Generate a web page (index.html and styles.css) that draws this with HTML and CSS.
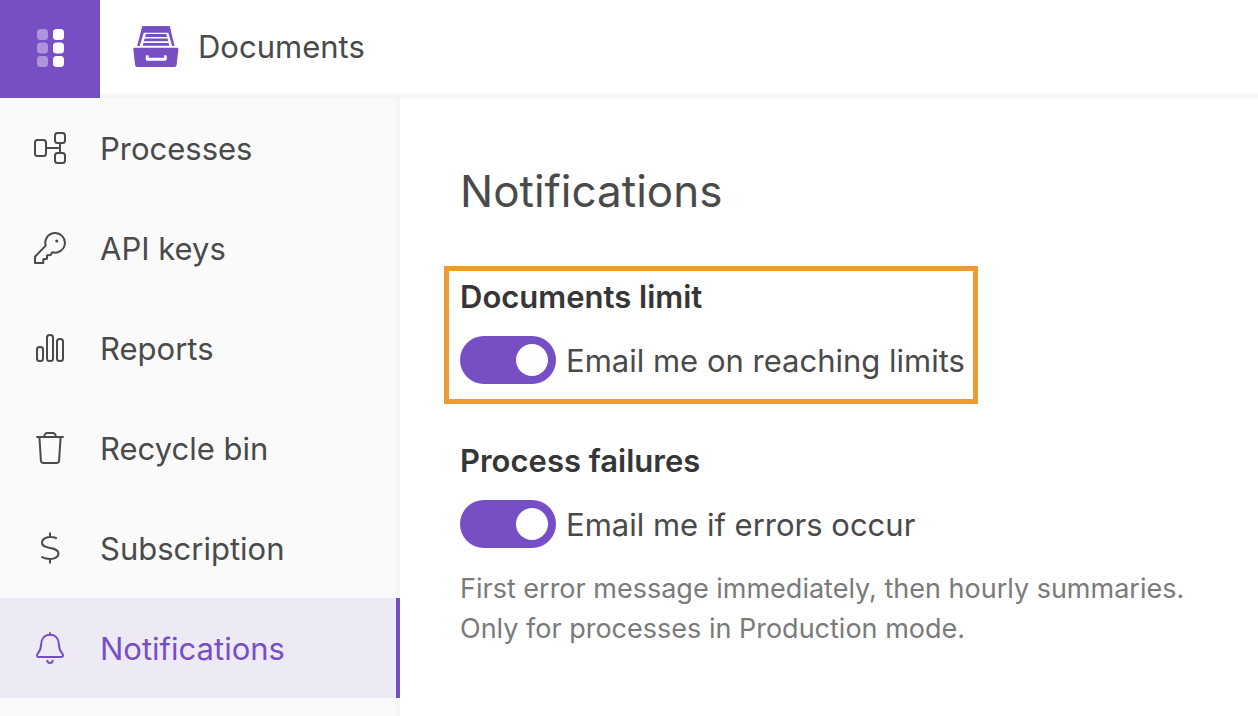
FILE: index.html
```html
<!DOCTYPE html>
<html lang="en">
<head>
<meta charset="utf-8">
<meta name="viewport" content="width=device-width, initial-scale=1">
<title>Documents – Notifications</title>
<link rel="stylesheet" href="styles.css">
</head>
<body>
<header class="topbar">
  <button class="launcher" type="button" aria-label="Open menu">
    <svg width="28" height="38" viewBox="0 0 28 38" fill="#fff" aria-hidden="true">
      <g opacity=".4"><rect width="11" height="11" rx="3.5"/><rect y="13.5" width="11" height="11" rx="3.5"/><rect y="27" width="11" height="11" rx="3.5"/></g>
      <rect x="16" width="11" height="11" rx="3.5"/><rect x="16" y="13.5" width="11" height="11" rx="3.5"/><rect x="16" y="27" width="11" height="11" rx="3.5"/>
    </svg>
  </button>
  <div class="brand">
    <svg width="46" height="42" viewBox="0 0 46 42" fill="#774fc5" aria-hidden="true">
      <path d="M9.3 .3H36.7L41.6 20H39.2L35.2 6.4H10.8L6.7 20H4.2Z"/>
      <path d="M9.3 .3H36.7L38.2 6.4H7.8Z"/>
      <path d="M12.8 8H33.4L34 11H12.2ZM11.6 12.5H34.6L35.2 15.2H11ZM10.4 17H35.6L36.2 19.8H9.7Z"/>
      <path fill-rule="evenodd" d="M1.5 21.7H44.2Q45.6 21.7 45.4 23.3L43.6 39Q43.3 41 41.5 41H4.2Q2.4 41 2.1 39L.3 23.3Q.1 21.7 1.5 21.7ZM14.3 29Q12.6 29 12.7 31V33Q12.7 34.8 14.5 34.8H32Q33.8 34.8 33.8 33V31Q33.8 29 32.2 29Q31 29 31 30.5V31.8H15.7V30.5Q15.7 29 14.3 29Z"/>
    </svg>
    <span>Documents</span>
  </div>
</header>
<div class="layout">
  <nav class="sidebar" aria-label="Main">
    <a class="nav-item" href="#processes">
      <svg class="icon" viewBox="0 0 32 32" aria-hidden="true"><rect x="1" y="8" width="11" height="16" rx="2.5"/><rect x="21" y="1" width="10" height="10" rx="2.5"/><rect x="21" y="21" width="10" height="10" rx="2.5"/><path d="M12 16H26M26 11V21"/></svg>
      <span class="label">Processes</span></a>
    <a class="nav-item" href="#api-keys">
      <svg class="icon" viewBox="0 0 32 32" aria-hidden="true"><path d="M11.7 13.6A9.8 9.8 0 1 1 18.3 20.2L16.6 22.9 13 23.3V26.8L9.3 27.3V31H1V24.7Z" stroke-linejoin="round"/><circle class="dot" cx="22.8" cy="9" r="1.6"/></svg>
      <span class="label">API keys</span></a>
    <a class="nav-item" href="#reports">
      <svg class="icon" viewBox="0 0 32 32" aria-hidden="true"><rect x="3" y="15" width="6" height="14" rx="2.5"/><rect x="13" y="3" width="6" height="26" rx="2.5"/><rect x="23" y="7" width="6" height="22" rx="2.5"/></svg>
      <span class="label">Reports</span></a>
    <a class="nav-item" href="#recycle-bin">
      <svg class="icon" viewBox="0 0 32 32" aria-hidden="true"><path d="M2.3 5H29.7M10 5C10.5 2 11.6 1 13.2 1H18.8C20.4 1 21.5 2 22 5M5.4 5L6.9 28.5Q7.1 31 9.5 31H22.5Q24.9 31 25.1 28.5L26.6 5"/></svg>
      <span class="label">Recycle bin</span></a>
    <a class="nav-item" href="#subscription">
      <svg class="icon" viewBox="0 0 32 32" aria-hidden="true"><path d="M16 .5V5M16 27V31.5M22.8 6.2C19.5 5 16.5 4.6 13.7 5.3C10.2 6.1 8 8.2 8 10.8C8 18 24.4 14 24.4 21.5C24.4 26.5 16.5 29 7.3 24.8"/></svg>
      <span class="label">Subscription</span></a>
    <a class="nav-item nav-item--active" href="#notifications" aria-current="page">
      <svg class="icon" viewBox="0 0 32 32" aria-hidden="true"><path d="M16 .3V2.8M16 2.8C10.5 2.8 7.3 6.8 7.1 12.5C7 17 6.5 18.2 4 21.2C2.3 23.4 2.6 25 4.8 25H27.2C29.4 25 29.7 23.4 28 21.2C25.5 18.2 25 17 24.9 12.5C24.7 6.8 21.5 2.8 16 2.8ZM13.1 28Q13.6 31 16 31T18.9 28"/></svg>
      <span class="label">Notifications</span></a>
  </nav>
  <main class="content">
    <h1>Notifications</h1>
    <section class="setting setting--highlighted">
      <h2>Documents limit</h2>
      <label class="toggle"><input type="checkbox" role="switch" checked><span class="label">Email me on reaching limits</span></label>
    </section>
    <section class="setting">
      <h2>Process failures</h2>
      <label class="toggle"><input type="checkbox" role="switch" checked><span class="label">Email me if errors occur</span></label>
      <p>First error message immediately, then hourly summaries.<br>Only for processes in Production mode.</p>
    </section>
  </main>
</div>
</body>
</html>
```

FILE: styles.css
```css
:root {
  --purple: #774fc5;
  --text: #4a4a4a;
  --line: #f5f5f5;
}

* {
  box-sizing: border-box;
}

body {
  margin: 0;
  min-height: 100vh;
  display: flex;
  flex-direction: column;
  background: #fff;
  color: var(--text);
  font: 31px/40px Inter, "Liberation Sans", sans-serif;
}

.topbar {
  display: flex;
}

.launcher {
  display: grid;
  place-items: center;
  width: 100px;
  height: 98px;
  padding: 0 0 2px 2px;
  border: 0;
  background: var(--purple);
}

.brand {
  flex: 1;
  display: flex;
  align-items: center;
  gap: 19px;
  padding-left: 33px;
  border-bottom: 4px solid var(--line);
}

.label {
  padding-top: 1px;
}

.layout {
  flex: 1;
  display: flex;
}

.sidebar {
  flex: none;
  width: 400px;
  background: #fafafa;
  box-shadow: inset -4px 0 var(--line);
}

.nav-item {
  display: flex;
  align-items: center;
  gap: 34px;
  height: 100px;
  padding-left: 34px;
  color: inherit;
  text-decoration: none;
}

.nav-item--active {
  background: #edeaf6;
  border-right: 4px solid var(--purple);
  color: var(--purple);
}

.icon {
  flex: none;
  width: 32px;
  height: 32px;
  fill: none;
  stroke: currentColor;
  stroke-width: 2;
}

.icon .dot {
  fill: currentColor;
  stroke: none;
}

.content {
  flex: 1;
  padding: 63px 16px 0 44px;
}

h1 {
  margin: 0 0 45px;
  padding-left: 16px;
  font-size: 44px;
  line-height: 60px;
  font-weight: 400;
}

h2 {
  margin: 0 0 19px;
  color: #363636;
  font-size: 31px;
  line-height: 40px;
  font-weight: 600;
}

.setting {
  padding: 0 16px;
}

.setting--highlighted {
  width: fit-content;
  margin-bottom: 37px;
  padding: 6px 8px 15px 11px;
  border: 5px solid #f09a37;
}

.toggle {
  display: flex;
  align-items: center;
  gap: 10px;
  width: fit-content;
}

.toggle input {
  appearance: none;
  flex: none;
  display: flex;
  justify-content: flex-end;
  width: 96px;
  height: 48px;
  margin: 0;
  padding: 8px;
  border-radius: 24px;
  background: var(--purple);
}

.toggle input::before {
  content: "";
  width: 32px;
  height: 32px;
  border-radius: 50%;
  background: #fff;
}

.toggle input:not(:checked) {
  justify-content: flex-start;
  background: #bbb;
}

p {
  margin: 21px 0 0;
  color: #7a7a7a;
  font-size: 27px;
  line-height: 40px;
}
```
